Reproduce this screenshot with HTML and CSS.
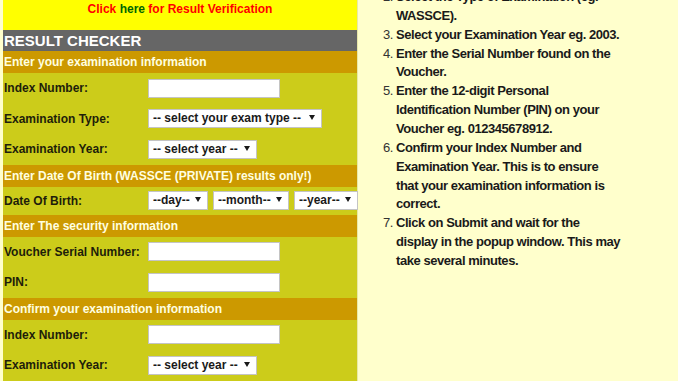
FILE: index.html
```html
<!DOCTYPE html>
<html lang="en">
<head>
<meta charset="utf-8">
<title>Result Checker</title>
<link rel="stylesheet" href="styles.css">
</head>
<body>
<div class="page">
  <section class="checker">
    <div class="verify"><span class="red">Click</span> <a class="green" href="#">here</a> <span class="red">for Result Verification</span></div>
    <h1 class="title">RESULT CHECKER</h1>
    <div class="bar">Enter your examination information</div>
    <div class="row"><label>Index Number:</label><div><input class="txt" type="text"></div></div>
    <div class="row"><label>Examination Type:</label><div><span class="pick"><select class="s-type"><option>-- select your exam type --</option></select></span></div></div>
    <div class="row"><label>Examination Year:</label><div><span class="pick"><select class="s-year"><option>-- select year --</option></select></span></div></div>
    <div class="bar">Enter Date Of Birth (WASSCE (PRIVATE) results only!)</div>
    <div class="row row-dob"><label>Date Of Birth:</label>
      <div class="dob">
        <span class="pick"><select class="s-day"><option>--day--</option></select></span>
        <span class="pick"><select class="s-month"><option>--month--</option></select></span>
        <span class="pick"><select class="s-dyear"><option>--year--</option></select></span>
      </div>
    </div>
    <div class="bar">Enter The security information</div>
    <div class="row"><label>Voucher Serial Number:</label><div><input class="txt" type="text"></div></div>
    <div class="row"><label>PIN:</label><div><input class="txt" type="text"></div></div>
    <div class="bar">Confirm your examination information</div>
    <div class="row"><label>Index Number:</label><div><input class="txt" type="text"></div></div>
    <div class="row"><label>Examination Year:</label><div><span class="pick"><select class="s-year"><option>-- select year --</option></select></span></div></div>
  </section>
  <aside class="help">
    <ol start="2">
      <li>Select the Type of Examination (eg. WASSCE).</li>
      <li>Select your Examination Year eg. 2003.</li>
      <li>Enter the Serial Number found on the Voucher.</li>
      <li>Enter the 12-digit Personal Identification Number (PIN) on your Voucher eg. 012345678912.</li>
      <li>Confirm your Index Number and Examination Year. This is to ensure that your examination information is correct.</li>
      <li>Click on Submit and wait for the display in the popup window. This may take several minutes.</li>
    </ol>
  </aside>
</div>
</body>
</html>
```

FILE: styles.css
```css
html, body {
  margin: 0;
  padding: 0;
}
body {
  background: #ffffcc;
  font-family: "Liberation Sans", Arial, sans-serif;
  overflow: hidden;
}
.page {
  display: flex;
  padding-left: 3px;
  height: 381px;
}
.checker {
  width: 354px;
  flex: none;
  background: #cccc1a;
}
.verify {
  box-sizing: border-box;
  height: 30px;
  padding-top: 2px;
  background: #ffff00;
  text-align: center;
  font-size: 12px;
  line-height: 14px;
  font-weight: bold;
}
.red {
  color: #ff0000;
}
.green {
  color: #006600;
  text-decoration: none;
}
.title {
  margin: 0;
  height: 21px;
  padding-left: 1px;
  background: #666666;
  color: #ffffff;
  font-size: 15px;
  line-height: 21px;
  font-weight: bold;
}
.bar {
  height: 22px;
  padding-left: 1px;
  background: #cc9900;
  color: #ffffe0;
  font-size: 12px;
  line-height: 22px;
  font-weight: bold;
}
.row {
  display: grid;
  grid-template-columns: 144px auto;
  align-items: center;
  height: 30.5px;
  padding-left: 1px;
  color: #1e1e0a;
  font-size: 12px;
  font-weight: bold;
}
.row > div {
  display: flex;
  align-items: center;
}
.row-dob {
  height: 28px;
}
.dob {
  gap: 5px;
}
.txt {
  box-sizing: border-box;
  width: 132px;
  height: 19px;
  margin: 0;
  padding: 1px 3px;
  border: 1px solid #c4c4c4;
  background: #ffffff;
  font: 12px "Liberation Sans", Arial, sans-serif;
}
.pick {
  position: relative;
  display: inline-block;
  height: 19px;
}
.pick select {
  -webkit-appearance: none;
  appearance: none;
  box-sizing: border-box;
  height: 19px;
  margin: 0;
  padding: 0 14px 0 4px;
  border: 1px solid #c4c4c4;
  border-radius: 0;
  background: #ffffff;
  color: #1a1a1a;
  font: bold 12px "Liberation Sans", Arial, sans-serif;
  line-height: 17px;
}
.pick::after {
  content: "";
  position: absolute;
  right: 7px;
  top: 6px;
  width: 0;
  height: 0;
  border-left: 3px solid transparent;
  border-right: 3px solid transparent;
  border-top: 5px solid #1a1a1a;
  pointer-events: none;
}
.s-type { width: 174px; }
.s-year { width: 109px; }
.s-day { width: 60px; }
.s-month { width: 76px; }
.s-dyear { width: 64px; }
.help {
  flex: 1;
  border-left: 1px solid #e8e8a8;
}
.help ol {
  margin: -12px 0 0;
  padding-left: 38px;
  width: 225px;
  color: #1a1a1a;
  font-size: 13px;
  line-height: 18.86px;
  font-weight: bold;
  letter-spacing: -0.45px;
}
.help li::marker {
  font-weight: normal;
  color: #333333;
}
```
